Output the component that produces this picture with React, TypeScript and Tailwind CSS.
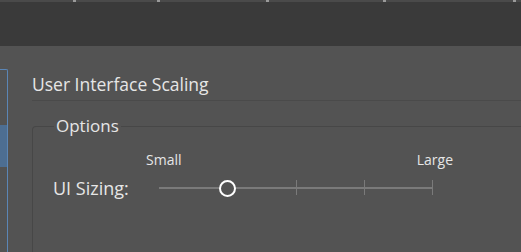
import React from "react";

const ticks = [73, 157, 266, 383, 513];

const App: React.FC = () => {
  return (
    <div className="w-[521px] h-[252px] overflow-hidden bg-[#535353] text-[#e6e6e6] font-['Open_Sans',sans-serif]">
      {/* top toolbar */}
      <div className="relative h-[46px] bg-[#3a3a3a] border-t-2 border-[#4a4a4a]">
        {ticks.map((x) => (
          <div key={x} className="absolute top-[-2px] w-[3px] h-[2px] bg-[#9a9a9a]" style={{ left: x }} />
        ))}
      </div>

      <div className="flex h-[206px]">
        {/* list panel (cut off) */}
        <div className="w-[8px] mt-[23px] border-t border-r border-[#5b86b6] rounded-tr-[2px]">
          <div className="mt-[55px] h-[42px] bg-[#4d6e92]" />
        </div>

        <div className="flex-1 pl-[24px] pt-[26px]">
          <div className="text-[17.5px] leading-[24px]">User Interface Scaling</div>
          <div className="mt-[4px] h-px bg-[#4a4a4a]" />

          {/* group box */}
          <div className="relative mt-[25px] h-[140px] border-t border-l border-[#474747] rounded-tl-[4px]">
            <div className="absolute left-[21px] top-[-13px] px-[2px] bg-[#535353] text-[17px] leading-[24px]">
              Options
            </div>

            <div className="flex pl-[20px] pt-[23px]">
              <div className="w-[106px] pt-[26px] text-[18px] leading-[24px]">UI Sizing:</div>
              <div className="w-[300px]">
                <div className="flex justify-between text-[14px] leading-[19px]">
                  <span className="ml-[-13px]">Small</span>
                  <span className="mr-[6px]">Large</span>
                </div>
                <div className="relative h-[20px] mt-[10px] w-[274px]">
                  <div className="absolute left-0 right-0 top-[8px] h-[2px] bg-[#7a7a7a]" />
                  {[68.25, 136.5, 204.75, 273].map((x) => (
                    <div key={x} className="absolute top-[1px] w-px h-[15px] bg-[#7a7a7a]" style={{ left: x }} />
                  ))}
                  <div className="absolute left-[60px] top-[1px] w-[17px] h-[17px] rounded-full border-[2.5px] border-white bg-[#535353]" />
                </div>
              </div>
            </div>
          </div>
        </div>
      </div>
    </div>
  );
};

export default App;
